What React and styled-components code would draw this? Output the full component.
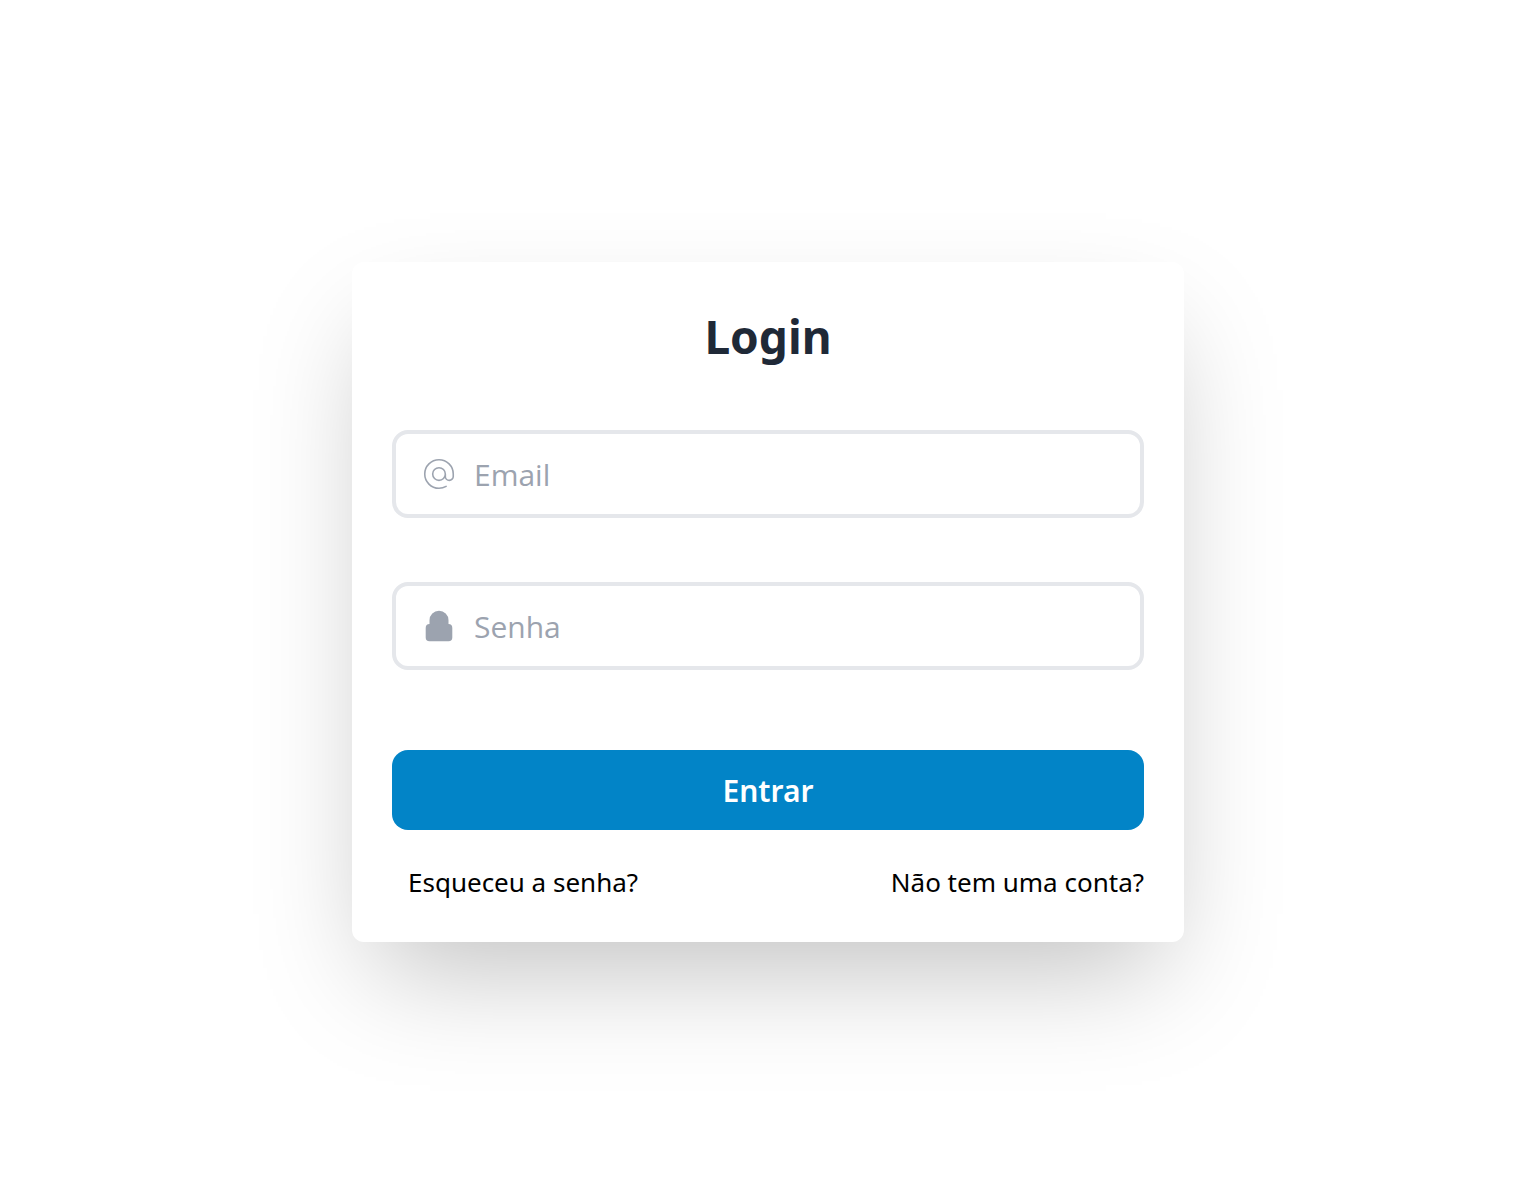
import React from "react";
import styled, { createGlobalStyle } from "styled-components";

const GlobalStyle = createGlobalStyle`
  *, *::before, *::after { box-sizing: border-box; }
  body { margin: 0; background: #fff; font-family: "Noto Sans", "Open Sans", sans-serif; }
`;

const Page = styled.main`
  min-height: 100vh;
  display: flex;
  align-items: center;
  justify-content: center;
`;

const Card = styled.form`
  width: 100%;
  max-width: 832px;
  padding: 40px;
  background: #fff;
  border-radius: 12px;
  box-shadow: 0 50px 108px -24px rgba(0, 0, 0, 0.25);
`;

const Title = styled.h1`
  margin: 0 0 60px;
  font-size: 46px;
  line-height: 68px;
  font-weight: 700;
  color: #1f2937;
  text-align: center;
`;

const Field = styled.label`
  display: flex;
  align-items: center;
  gap: 16px;
  height: 88px;
  margin-bottom: 64px;
  padding: 0 24px;
  border: 4px solid #e5e7eb;
  border-radius: 16px;
  color: #9ca3af;
`;

const Icon = styled.svg`
  flex: none;
  width: 38px;
  height: 38px;
`;

const Input = styled.input`
  flex: 1;
  min-width: 0;
  padding: 2px 0 0;
  border: 0;
  outline: 0;
  background: transparent;
  font-family: "Open Sans", "Noto Sans", sans-serif;
  font-size: 30px;
  line-height: 40px;
  color: #1f2937;

  &::placeholder { color: #9ca3af; opacity: 1; }
`;

const Submit = styled.button`
  display: block;
  width: 100%;
  height: 80px;
  margin-top: 80px;
  border: 0;
  border-radius: 16px;
  background: #0284c7;
  color: #fff;
  font: inherit;
  font-size: 30px;
  font-weight: 600;
  cursor: pointer;
`;

const Links = styled.nav`
  display: flex;
  justify-content: space-between;
  padding: 32px 0 0 16px;
`;

const TextLink = styled.a`
  font-size: 26px;
  line-height: 40px;
  color: #000;
  text-decoration: none;
`;

const AtIcon = () => (
  <Icon viewBox="0 0 24 24" fill="none" stroke="currentColor" strokeWidth="1" aria-hidden="true">
    <path
      strokeLinecap="round"
      strokeLinejoin="round"
      d="M16 12a4 4 0 1 0-8 0 4 4 0 0 0 8 0zm0 0v1.5a2.5 2.5 0 0 0 5 0V12a9 9 0 1 0-9 9m4.5-1.206a8.959 8.959 0 0 1-4.5 1.207"
    />
  </Icon>
);

const LockIcon = () => (
  <Icon viewBox="0 0 20 20" fill="currentColor" aria-hidden="true">
    <path d="M5 9V7a5 5 0 0 1 10 0v2a2 2 0 0 1 2 2v5a2 2 0 0 1-2 2H5a2 2 0 0 1-2-2v-5a2 2 0 0 1 2-2z" />
  </Icon>
);

export default function App() {
  return (
    <>
      <GlobalStyle />
      <Page>
        <Card onSubmit={(event) => event.preventDefault()}>
          <Title>Login</Title>
          <Field>
            <AtIcon />
            <Input type="email" name="email" placeholder="Email" aria-label="Email" />
          </Field>
          <Field>
            <LockIcon />
            <Input type="password" name="password" placeholder="Senha" aria-label="Senha" />
          </Field>
          <Submit type="submit">Entrar</Submit>
          <Links>
            <TextLink href="#recuperar">Esqueceu a senha?</TextLink>
            <TextLink href="#cadastro">Não tem uma conta?</TextLink>
          </Links>
        </Card>
      </Page>
    </>
  );
}
